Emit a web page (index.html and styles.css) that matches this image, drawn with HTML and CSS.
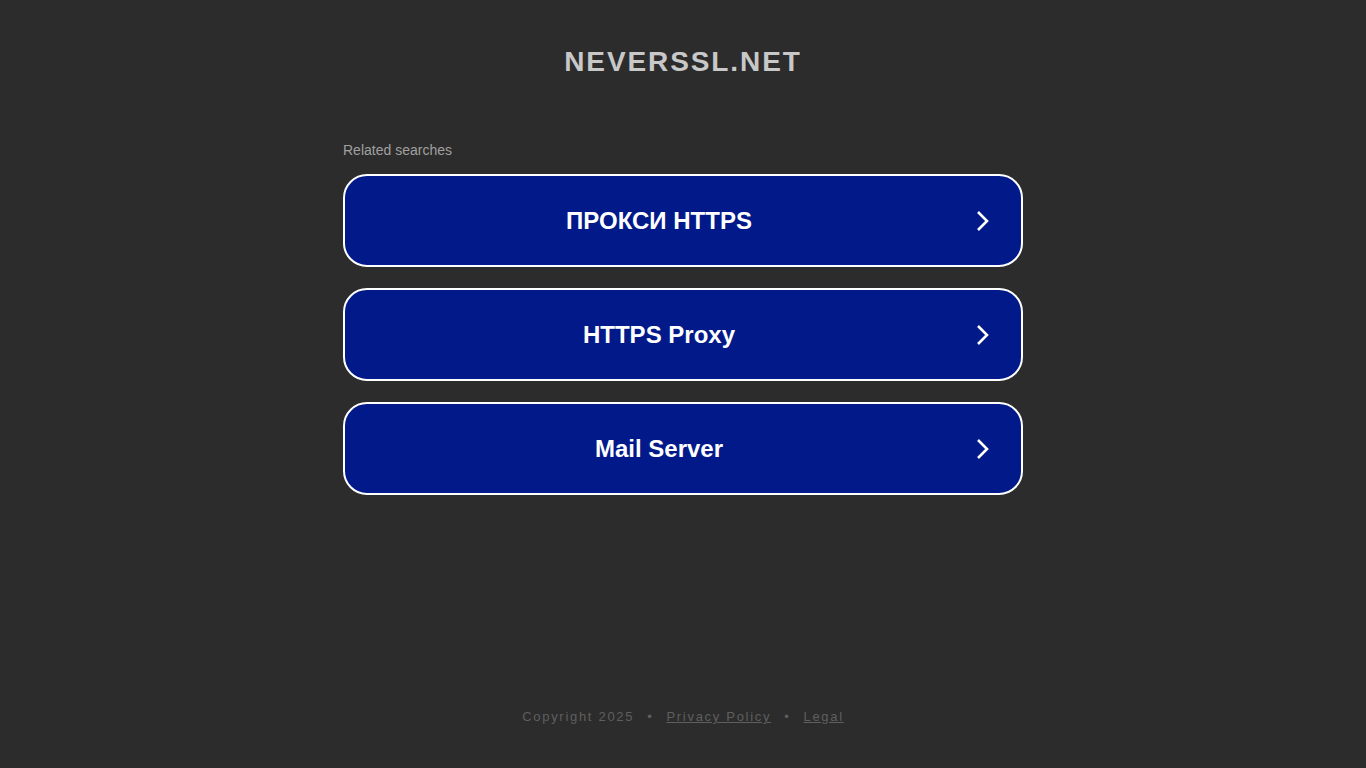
FILE: index.html
```html
<!DOCTYPE html>
<html>
<head>
<meta charset="utf-8">
<link rel="stylesheet" href="styles.css">
</head>
<body>
<div class="page">
  <header class="header"><h1 class="domain">NEVERSSL.NET</h1></header>
  <main class="content">
    <div class="related">Related searches</div>
    <div class="list">
      <a class="item" href="#"><span class="label">ПРОКСИ HTTPS</span><span class="arrow"><svg width="16" height="22" viewBox="0 0 16 22"><path d="M3 2 L12 11 L3 20" fill="none" stroke="#fff" stroke-width="2.6"/></svg></span></a>
      <a class="item" href="#"><span class="label">HTTPS Proxy</span><span class="arrow"><svg width="16" height="22" viewBox="0 0 16 22"><path d="M3 2 L12 11 L3 20" fill="none" stroke="#fff" stroke-width="2.6"/></svg></span></a>
      <a class="item" href="#"><span class="label">Mail Server</span><span class="arrow"><svg width="16" height="22" viewBox="0 0 16 22"><path d="M3 2 L12 11 L3 20" fill="none" stroke="#fff" stroke-width="2.6"/></svg></span></a>
    </div>
  </main>
  <footer class="footer">
    <span>Copyright 2025</span><span class="dot">•</span><a href="#">Privacy Policy</a><span class="dot">•</span><a href="#">Legal</a>
  </footer>
</div>
</body>
</html>
```
FILE: styles.css
```css
html, body {
  margin: 0;
  padding: 0;
  background: #2c2c2c;
  font-family: "Liberation Sans", Arial, sans-serif;
}
.page {
  height: 768px;
  display: flex;
  flex-direction: column;
  align-items: center;
}
.header {
  padding-top: 44px;
  height: 100px;
  box-sizing: border-box;
}
.domain {
  margin: 0;
  font-size: 28px;
  line-height: 36px;
  font-weight: bold;
  letter-spacing: 1.9px;
  color: #c8c8c8;
}
.content {
  width: 680px;
  padding-top: 42px;
}
.related {
  font-size: 14px;
  line-height: 16px;
  color: #a0a0a0;
  margin-bottom: 16px;
}
.list {
  display: flex;
  flex-direction: column;
  gap: 21px;
}
.item {
  display: flex;
  align-items: center;
  height: 93px;
  box-sizing: border-box;
  border: 2px solid #ffffff;
  border-radius: 24px;
  background: #011989;
  text-decoration: none;
  color: #fff;
  padding: 0 30px 0 0;
}
.label {
  flex: 1;
  text-align: center;
  font-size: 24px;
  font-weight: bold;
  margin-left: -2px;
}
.arrow {
  width: 16px;
  height: 22px;
  display: flex;
}
.footer {
  margin-top: auto;
  margin-bottom: 44px;
  font-size: 13px;
  letter-spacing: 1.7px;
  color: #5f5f5f;
  display: flex;
}
.footer a {
  color: #5f5f5f;
  text-decoration: underline;
}
.dot {
  margin: 0 13px;
}
```
